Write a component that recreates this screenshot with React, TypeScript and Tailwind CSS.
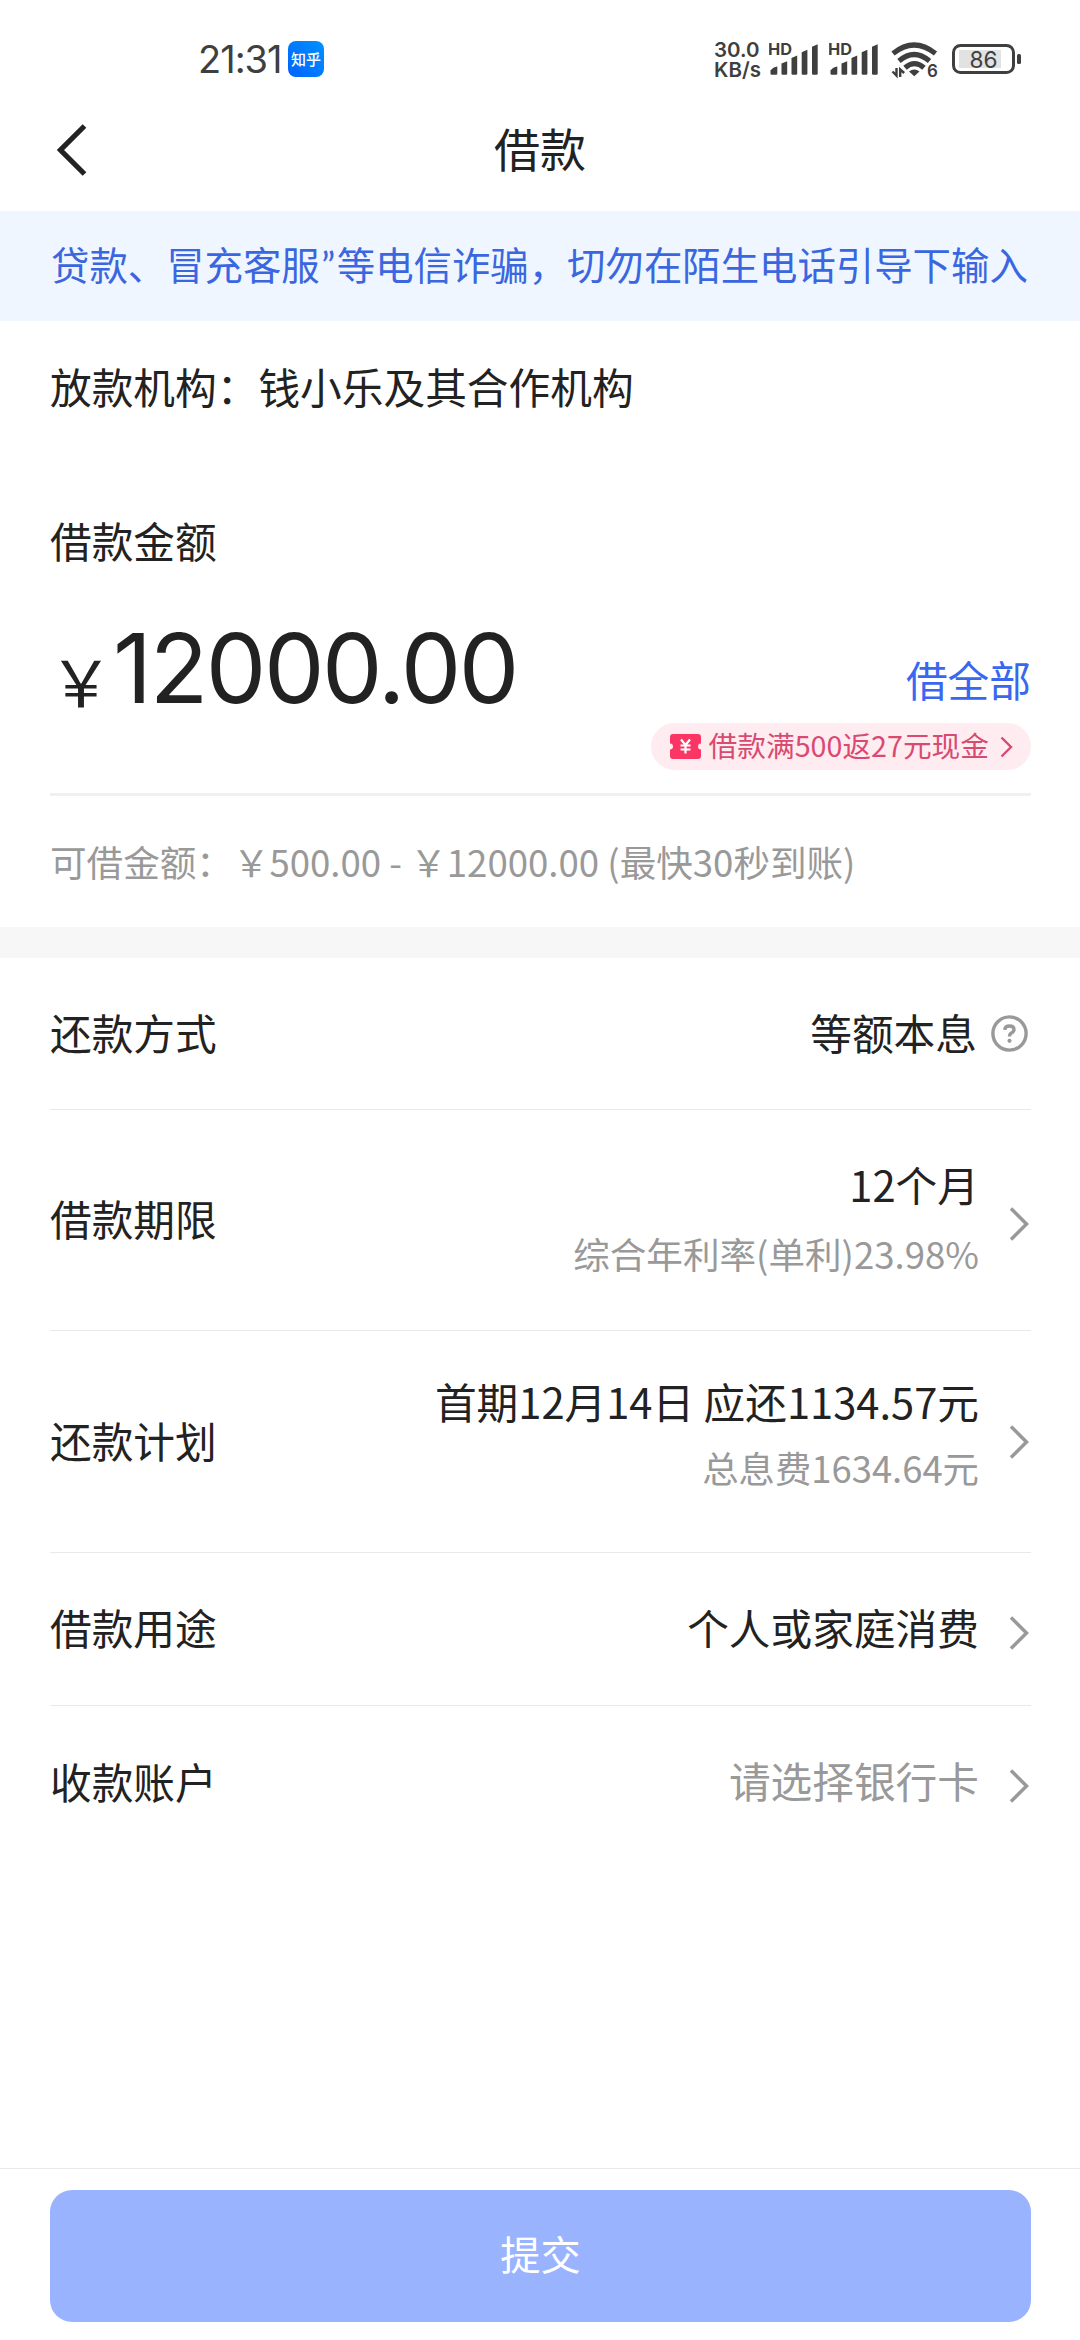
import type { ReactNode } from "react";

function SignalBars() {
  return (
    <svg width="50" height="38" viewBox="0 0 50 38" className="block">
      <text x="-1" y="15" fontSize="16" fontWeight="700" fontFamily="Inter, sans-serif" fill="#3f3f3f" textLength="24" lengthAdjust="spacingAndGlyphs">
        HD
      </text>
      <g fill="#3f3f3f">
        <path d="M1.500 33.500V30.500Q4 27 8.300 26.500V33.500Q8.300 34.700 7 34.700H2.700Q1.500 34.700 1.500 33.500Z" />
        <path d="M12.500 33.500V23.500L18.200 21.300V33.500Q18.200 34.700 17 34.700H13.700Q12.500 34.700 12.500 33.500Z" />
        <path d="M22.500 33.500V18L28.200 15.500V33.500Q28.200 34.700 27 34.700H23.700Q22.500 34.700 22.500 33.500Z" />
        <path d="M32.700 33.500V12.300L38.400 9.800V33.500Q38.400 34.700 37.200 34.700H33.900Q32.700 34.700 32.700 33.500Z" />
        <path d="M43 33.500V6.800L48.700 4.300V33.500Q48.700 34.700 47.500 34.700H44.200Q43 34.700 43 33.500Z" />
      </g>
    </svg>
  );
}

function WifiIcon() {
  return (
    <svg width="48" height="44" viewBox="0 -3 48 44" className="block">
      <g fill="none" stroke="#3f3f3f" strokeWidth="5.200">
        <path d="M2 13.500Q23 -3.500 44.500 13.500" />
        <path d="M8 21Q23 8 38.500 21" />
        <path d="M14 27.800Q23.500 19.500 33 27.800" />
      </g>
      <path d="M18 31.500Q23.300 27.500 28.500 31.500L23.300 36.200Z" fill="#3f3f3f" />
      <path d="M5.500 28V35.500L1.500 31.500M9.200 37V29.500L13.200 33" fill="none" stroke="#3f3f3f" strokeWidth="2.400" />
      <text x="36" y="36.800" fontSize="17" fontWeight="600" fontFamily="Inter, sans-serif" fill="#3f3f3f">
        6
      </text>
    </svg>
  );
}

function BatteryIcon() {
  return (
    <svg width="69" height="30" viewBox="0 0 69 30" className="block">
      <rect x="7" y="6" width="42" height="18" fill="#e2e2e2" />
      <rect x="1.500" y="1.500" width="60" height="27" rx="7" fill="none" stroke="#3f3f3f" strokeWidth="3" />
      <rect x="65" y="10" width="4" height="10" rx="1.500" fill="#3f3f3f" />
      <text x="17.500" y="23.500" fontSize="23" fontFamily="Inter, sans-serif" fill="#3f3f3f" textLength="28" lengthAdjust="spacingAndGlyphs">
        86
      </text>
    </svg>
  );
}

function Chevron() {
  return (
    <svg width="22" height="34" viewBox="0 0 22 34" fill="none" className="block">
      <path d="M2 1.500L17.500 17L2 32.500" stroke="#999" strokeWidth="3.500" />
    </svg>
  );
}

function CouponIcon() {
  return (
    <svg width="31" height="25" viewBox="0 0 31 25" className="block">
      <path
        d="M3 0H28Q31 0 31 3V9.500A3 3 0 0 0 31 15.500V22Q31 25 28 25H3Q0 25 0 22V15.500A3 3 0 0 0 0 9.500V3Q0 0 3 0Z"
        fill="#fb3665"
      />
      <path d="M11 5.500L15.500 11L20 5.500M15.500 11V19.500M10.500 11.500H20.500M10.500 15.500H20.500" stroke="#fff" strokeWidth="2.200" fill="none" />
    </svg>
  );
}

function HelpIcon() {
  return (
    <svg width="37" height="37" viewBox="0 0 37 37" fill="none" className="block">
      <circle cx="18.500" cy="18.500" r="16.600" stroke="#999" strokeWidth="3.400" />
      <path d="M13.800 14.800Q14 11 18.500 11Q23 11 23 14.600Q23 16.800 20.500 18Q18.500 19 18.500 21.500" stroke="#999" strokeWidth="3.400" />
      <circle cx="18.500" cy="25.800" r="2.100" fill="#999" />
    </svg>
  );
}

interface RowProps {
  label: string;
  className: string;
  arrowClassName?: string;
  children: ReactNode;
}

function Row({ label, className, arrowClassName, children }: RowProps) {
  return (
    <div className={`mr-[49px] ml-[50px] flex items-center justify-between border-[#e9e9e9] ${className}`}>
      <span className="pb-[4px] leading-[46px]">{label}</span>
      <div className="flex items-center">
        {children}
        {arrowClassName !== undefined && (
          <span className={`ml-[30px] ${arrowClassName}`}>
            <Chevron />
          </span>
        )}
      </div>
    </div>
  );
}

export default function App() {
  return (
    <div className="flex h-[2340px] w-[1080px] flex-col overflow-hidden bg-white font-['Noto_Sans_CJK_SC',sans-serif] text-[41.7px] text-[#222]">
      {/* Status bar */}
      <div className="flex h-[89px] items-center justify-between pt-[29px] pr-[59px] pl-[198px] text-[#3f3f3f]">
        <div className="flex items-center">
          <span className="w-[90px] font-['Inter',sans-serif] text-[38px] leading-10 tracking-[-1px] whitespace-nowrap">21:31</span>
          <span className="flex size-9 items-center justify-center rounded-lg bg-linear-to-bl from-[#0092ff] to-[#0060ff] pb-[2px] text-[15px] leading-none font-medium text-white">
            知乎
          </span>
        </div>
        <div className="flex items-center">
          <div className="w-[55px] pt-px font-['Inter',sans-serif] text-[20.5px] leading-[20px] font-semibold">
            <div>30.0</div>
            <div>KB/s</div>
          </div>
          <SignalBars />
          <span className="ml-[10px]">
            <SignalBars />
          </span>
          <span className="ml-[12px]">
            <WifiIcon />
          </span>
          <span className="ml-[13px]">
            <BatteryIcon />
          </span>
        </div>
      </div>

      {/* Title bar */}
      <div className="grid h-[122px] grid-cols-3 items-center px-[57px]">
        <svg width="30" height="52" viewBox="0 0 30 52" fill="none" className="block">
          <path d="M27.500 2L3.500 26L27.500 50" stroke="#222" strokeWidth="5.200" />
        </svg>
        <h1 className="pb-[7px] text-center text-[46px] leading-[50px]">借款</h1>
      </div>

      {/* Scrolling notice */}
      <div className="h-[110px] bg-[#eff6ff] pl-[51px] text-[38.4px] leading-[105px] whitespace-nowrap text-[#3a67e0]">
        贷款、冒充客服<span className="inline-block w-[17px] text-center font-['Lato',sans-serif]">”</span>等电信诈骗，切勿在陌生电话引导下输入
      </div>

      {/* Amount */}
      <section className="flex h-[606px] flex-col pt-[42px] pr-[49px] pl-[50px]">
        <p className="leading-[46px]">放款机构：钱小乐及其合作机构</p>
        <p className="mt-[108px] leading-[46px]">借款金额</p>
        <div className="mt-[37px] flex h-[123px] items-start justify-between">
          <div className="flex items-baseline pt-[7px] leading-[122px]">
            <span className="-ml-px w-[64px] translate-y-[4px] text-[64px]">￥</span>
            <span className="font-['Inter',sans-serif] text-[96px] tracking-[-2.4px]">12000.00</span>
          </div>
          <span className="mt-[56px] leading-[46px] text-[#3a67f0]">借全部</span>
        </div>
        <div className="flex h-[47px] items-center self-end rounded-full bg-[#ffecf1] pr-[18px] pl-[19px] text-[#d94a70]">
          <CouponIcon />
          <span className="ml-[8px] pb-[3px] text-[28.7px] leading-8">借款满500返27元现金</span>
          <svg width="13" height="22" viewBox="0 0 13 22" fill="none" className="ml-[11px] block">
            <path d="M1.500 1.500L11 11L1.500 20.500" stroke="#d94a70" strokeWidth="2.400" />
          </svg>
        </div>
        <div className="mt-[23px] h-[3px] shrink-0 bg-[#f0f0f0]" />
        <p className="mt-[43px] text-[36.6px] leading-[46px] whitespace-nowrap text-[#999]">
          可借金额：￥500.00 - ￥12000.00 (最快30秒到账)
        </p>
      </section>

      <div className="h-[31px] shrink-0 bg-[#f7f7f7]" />

      {/* Loan details */}
      <Row label="还款方式" className="h-[152px] border-b">
        <span className="pb-[4px] leading-[46px]">等额本息</span>
        <span className="mr-[3px] ml-[14px]">
          <HelpIcon />
        </span>
      </Row>
      <Row label="借款期限" className="h-[221px] border-b" arrowClassName="pt-[8px]">
        <div className="flex flex-col gap-[24px] pb-[3px] text-right leading-[46px]">
          <span>12个月</span>
          <span className="text-[36.6px] text-[#999]">综合年利率(单利)23.98%</span>
        </div>
      </Row>
      <Row label="还款计划" className="h-[222px] border-b" arrowClassName="">
        <div className="flex flex-col gap-[20px] pb-[16px] text-right leading-[46px]">
          <span>首期12月14日 应还1134.57元</span>
          <span className="text-[36.4px] text-[#999]">总息费1634.64元</span>
        </div>
      </Row>
      <Row label="借款用途" className="h-[153px] border-b" arrowClassName="pt-[8px]">
        <span className="pb-[5px] leading-[46px]">个人或家庭消费</span>
      </Row>
      <Row label="收款账户" className="h-[153px]" arrowClassName="pt-[6px]">
        <span className="pb-[5px] leading-[46px] text-[#999]">请选择银行卡</span>
      </Row>

      {/* Submit */}
      <div className="mt-auto h-[172px] border-t border-[#e9e9e9] pt-[21px] pr-[49px] pl-[50px]">
        <button className="block h-[132px] w-full rounded-[22px] bg-[#99b3ff] pb-[6px] text-[40.3px] leading-[46px] text-white">
          提交
        </button>
      </div>
    </div>
  );
}
